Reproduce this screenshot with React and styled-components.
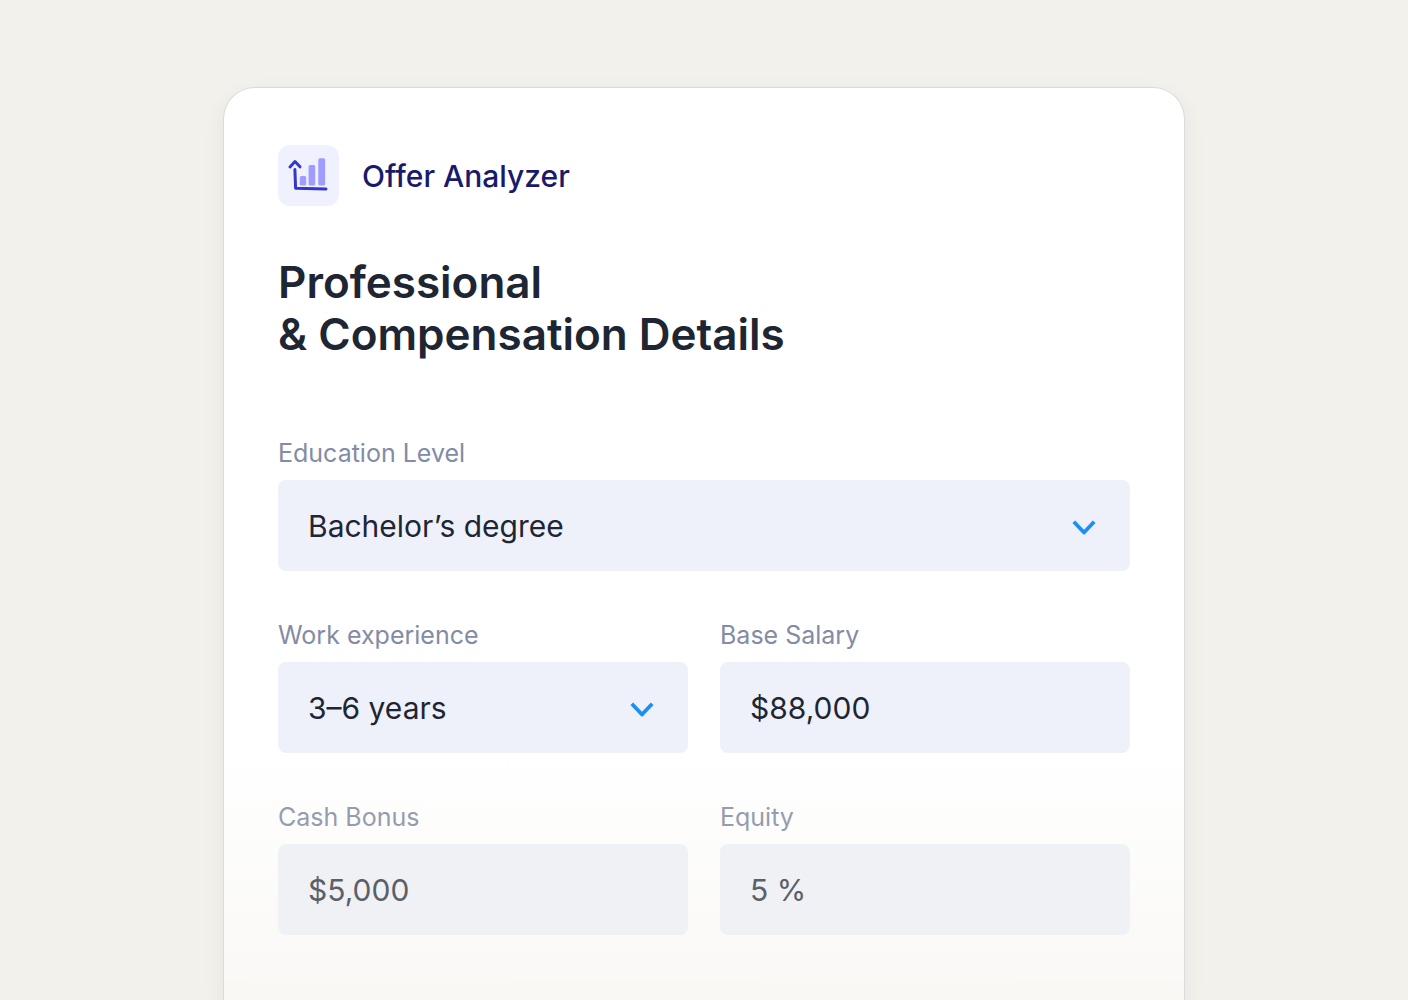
import React, {useState} from 'react';
import styled, {createGlobalStyle} from 'styled-components';

function App() {
  const [education, setEducation] = useState('bachelor')
  const [experience, setExperience] = useState('3-6')
  const [salary, setSalary] = useState('$88,000')
  const [bonus, setBonus] = useState('$5,000')
  const [equity, setEquity] = useState('5 %')

  return (
    <Page>
      <GlobalStyle />
      <Card>
        <Brand>
          <BrandIcon>
            <ChartIcon />
          </BrandIcon>
          <BrandName>Offer Analyzer</BrandName>
        </Brand>
        <Title>Professional<br />&amp; Compensation Details</Title>
        <Form onSubmit={e=> e.preventDefault()}>
          <Field $wide>
            <Label htmlFor="education">Education Level</Label>
            <SelectWrap>
              <Select id="education" value={education} onChange={e=> setEducation(e.target.value)}>
                <option value="bachelor">Bachelor’s degree</option>
              </Select>
              <Chevron />
            </SelectWrap>
          </Field>
          <Field>
            <Label htmlFor="experience">Work experience</Label>
            <SelectWrap>
              <Select id="experience" value={experience} onChange={e=> setExperience(e.target.value)}>
                <option value="3-6">3–6 years</option>
              </Select>
              <Chevron />
            </SelectWrap>
          </Field>
          <Field>
            <Label htmlFor="salary">Base Salary</Label>
            <Input id="salary" value={salary} onChange={e=> setSalary(e.target.value)} />
          </Field>
          <Field>
            <Label htmlFor="bonus" $faded>Cash Bonus</Label>
            <Input id="bonus" $faded value={bonus} onChange={e=> setBonus(e.target.value)} />
          </Field>
          <Field>
            <Label htmlFor="equity" $faded>Equity</Label>
            <Input id="equity" $faded value={equity} onChange={e=> setEquity(e.target.value)} />
          </Field>
        </Form>
      </Card>
    </Page>
  );
}

const ChartIcon = () => (
  <svg width="61" height="61" viewBox="0 0 61 61" fill="none" aria-hidden="true">
    <rect x="21.8" y="31" width="6.4" height="9.6" rx="1.5" fill="#9f9bff" />
    <rect x="30.6" y="20" width="6.6" height="20.6" rx="1.5" fill="#9f9bff" />
    <rect x="40.3" y="13.3" width="6.8" height="27.3" rx="1.5" fill="#9f9bff" />
    <path d="M16.9 24.5L17.6 43.2L48 44" stroke="#3238c9" strokeWidth="3" strokeLinecap="round" strokeLinejoin="round" />
    <path d="M12 22L17 16.5L22 21.8" stroke="#3238c9" strokeWidth="3" strokeLinecap="round" strokeLinejoin="round" />
  </svg>
)

const Chevron = () => (
  <ChevronSvg width="24" height="16" viewBox="0 0 24 16" fill="none" aria-hidden="true">
    <path d="M1.8 1.8L12 12.5L22.2 1.8" stroke="#1a90f5" strokeWidth="3.8" strokeLinejoin="round" />
  </ChevronSvg>
)

const GlobalStyle = createGlobalStyle`
  * {
    box-sizing: border-box;
  }
  body {
    margin: 0;
    background: #f2f1ec;
    font-family: Inter, "Liberation Sans", sans-serif;
  }
`

const Page = styled.div`
  display: flex;
  justify-content: center;
  min-height: 100vh;
  padding: 87px 24px 0;
`

const Card = styled.main`
  width: 100%;
  max-width: 962px;
  padding: 57px 54px 64px;
  border: 1px solid #d8dbde;
  border-bottom: 0;
  border-radius: 32px 32px 0 0;
  background: linear-gradient(to top, #f9f8f5, #fff 250px);
  box-shadow: 0 8px 24px rgba(40, 40, 30, 0.06);
`

const Brand = styled.div`
  display: flex;
  align-items: center;
  gap: 23px;
`

const BrandIcon = styled.div`
  display: flex;
  width: 61px;
  height: 61px;
  border-radius: 12px;
  background: #eff1ff;
`

const BrandName = styled.span`
  color: #1a1a6a;
  font-size: 30px;
  font-weight: 500;
`

const Title = styled.h1`
  margin: 50px 0 0;
  color: #1e2633;
  font-size: 44px;
  font-weight: 600;
  line-height: 52px;
`

const Form = styled.form`
  display: grid;
  grid-template-columns: 1fr 1fr;
  gap: 48px 32px;
  margin-top: 77px;
`

const Field = styled.div`
  display: flex;
  flex-direction: column;
  gap: 11px;
  min-width: 0;
  grid-column: ${p=> p.$wide ? '1 / -1' : 'auto'};
`

const Label = styled.label`
  color: ${p=> p.$faded ? '#959cb0' : '#838ba5'};
  font-size: 25px;
  line-height: 32px;
`

const Input = styled.input`
  width: 100%;
  height: 91px;
  padding: 0 30px;
  border: 0;
  border-radius: 8px;
  background: ${p=> p.$faded ? '#f0f1f4' : '#eef1fa'};
  color: ${p=> p.$faded ? '#5b6068' : '#1e2633'};
  font-family: inherit;
  font-size: 30px;
`

const Select = styled(Input).attrs({as: 'select'})`
  display: block;
  appearance: none;
`

const SelectWrap = styled.div`
  position: relative;
`

const ChevronSvg = styled.svg`
  position: absolute;
  top: 40px;
  right: 34px;
  pointer-events: none;
`

export default App;
